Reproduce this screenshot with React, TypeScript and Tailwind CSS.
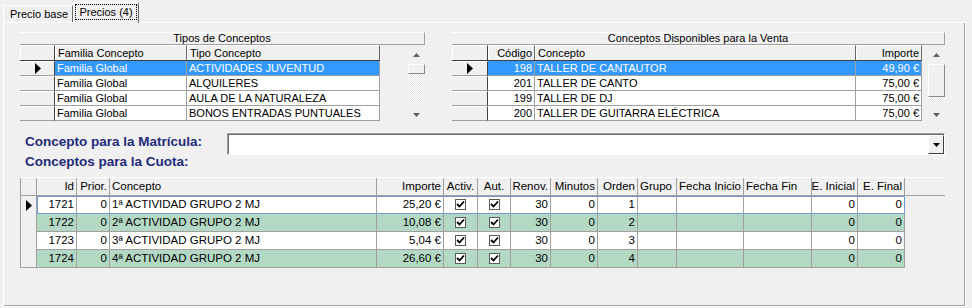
import React from "react";

const DARK = "border-[#696969]";

function RowArrow() {
  return (
    <svg width="6" height="11" viewBox="0 0 6 11" className="block">
      <path d="M0 0 L6 5.5 L0 11 Z" fill="#000" />
    </svg>
  );
}

function UpArrow({ color = "#606060" }: { color?: string }) {
  return (
    <svg width="7" height="4" viewBox="0 0 7 4" className="block">
      <path d="M3.5 0 L7 4 L0 4 Z" fill={color} />
    </svg>
  );
}
function DownArrow({ color = "#606060" }: { color?: string }) {
  return (
    <svg width="7" height="4" viewBox="0 0 7 4" className="block">
      <path d="M0 0 L7 0 L3.5 4 Z" fill={color} />
    </svg>
  );
}

function Check() {
  return (
    <div className="w-[11px] h-[11px] border border-[#5a5a5a] bg-white flex items-center justify-center">
      <svg width="9" height="9" viewBox="0 0 9 9" className="block">
        <path d="M1 4 L3.5 6.5 L8 1.5" stroke="#000" strokeWidth="1.8" fill="none" />
      </svg>
    </div>
  );
}

function ScrollBar({ thumbH }: { thumbH: number }) {
  return (
    <div className="w-[17px] h-[76px] flex flex-col bg-[#f0f0f0]">
      <div className="h-[19px] flex items-center justify-center">
        <UpArrow />
      </div>
      <div
        className="border-t border-l border-white border-r border-b border-r-[#8a8a8a] border-b-[#8a8a8a] bg-[#f0f0f0]"
        style={{ height: thumbH }}
      />
      <div className="flex-1 bg-[repeating-conic-gradient(#ffffff_0_25%,#e3e3e3_0_50%)] bg-[length:2px_2px]" />
      <div className="h-[14px] flex items-center justify-center pt-[2px]">
        <DownArrow />
      </div>
    </div>
  );
}

function TitleBand({ text }: { text: string }) {
  return (
    <div className="h-[13px] border-t border-white border-b border-r border-b-[#a0a0a0] border-r-[#a0a0a0] text-center text-[11px] leading-[11px]">
      {text}
    </div>
  );
}

type Col = { w: number; label: string; align?: "left" | "right" };

function TopGrid({
  cols,
  rows,
  indW,
}: {
  cols: Col[];
  rows: string[][];
  indW: number;
}) {
  return (
    <div className="flex flex-col">
      <div className="flex h-[16px] border-b border-[#404040]">
        <div
          className="h-full border-t border-l border-white border-r border-r-[#404040] bg-[#f0f0f0]"
          style={{ width: indW }}
        />
        {cols.map((c, i) => (
          <div
            key={i}
            className={`h-full border-t border-l border-white border-r border-r-[#696969] bg-[#f0f0f0] px-[2px] text-[11px] leading-[14px] whitespace-nowrap overflow-hidden ${
              c.align === "right" ? "text-right" : "text-left"
            }`}
            style={{ width: c.w }}
          >
            {c.label}
          </div>
        ))}
      </div>
      {rows.map((r, ri) => {
        const sel = ri === 0;
        return (
          <div key={ri} className="flex h-[15px]">
            <div
              className="h-full border-t border-white border-b border-b-[#a0a0a0] border-r border-r-[#404040] bg-[#f0f0f0] flex items-center pl-[15px]"
              style={{ width: indW }}
            >
              {sel && <RowArrow />}
            </div>
            {cols.map((c, ci) => (
              <div
                key={ci}
                className={`h-full border-r border-b border-[#a0a0a0] px-[2px] text-[11px] leading-[14px] whitespace-nowrap overflow-hidden ${
                  c.align === "right" ? "text-right" : "text-left"
                } ${sel ? "bg-[#3399ff] text-white" : "bg-white text-black"}`}
                style={{ width: c.w }}
              >
                {r[ci]}
              </div>
            ))}
          </div>
        );
      })}
    </div>
  );
}

type BCol = { w: number; label: string; h: "l" | "r" | "c" };

const bcols: BCol[] = [
  { w: 40, label: "Id", h: "r" },
  { w: 33, label: "Prior.", h: "r" },
  { w: 267, label: "Concepto", h: "l" },
  { w: 67, label: "Importe", h: "r" },
  { w: 34, label: "Activ.", h: "c" },
  { w: 33, label: "Aut.", h: "c" },
  { w: 40, label: "Renov.", h: "r" },
  { w: 47, label: "Minutos", h: "r" },
  { w: 40, label: "Orden", h: "r" },
  { w: 39, label: "Grupo", h: "l" },
  { w: 67, label: "Fecha Inicio", h: "l" },
  { w: 68, label: "Fecha Fin", h: "l" },
  { w: 46, label: "E. Inicial", h: "r" },
  { w: 47, label: "E. Final", h: "r" },
];

const brows = [
  ["1721", "0", "1ª ACTIVIDAD GRUPO 2 MJ", "25,20 €", "x", "x", "30", "0", "1", "", "", "", "0", "0"],
  ["1722", "0", "2ª ACTIVIDAD GRUPO 2 MJ", "10,08 €", "x", "x", "30", "0", "2", "", "", "", "0", "0"],
  ["1723", "0", "3ª ACTIVIDAD GRUPO 2 MJ", "5,04 €", "x", "x", "30", "0", "3", "", "", "", "0", "0"],
  ["1724", "0", "4ª ACTIVIDAD GRUPO 2 MJ", "26,60 €", "x", "x", "30", "0", "4", "", "", "", "0", "0"],
];

function alignCls(h: "l" | "r" | "c") {
  return h === "r" ? "text-right justify-end" : h === "c" ? "text-center justify-center" : "text-left justify-start";
}

function BottomGrid() {
  return (
    <div className="flex flex-col w-[925px]">
      <div className="flex h-[19px] border-t border-white border-b border-b-[#a0a0a0]">
        <div className="w-[17px] h-full border-l border-r border-[#a0a0a0]" />
        {bcols.map((c, i) => (
          <div
            key={i}
            className={`h-full flex items-center border-r border-[#a0a0a0] px-[2px] text-[11.5px] whitespace-nowrap overflow-hidden ${alignCls(c.h)}`}
            style={{ width: c.w }}
          >
            {c.label}
          </div>
        ))}
      </div>
      {brows.map((r, ri) => {
        const sel = ri === 0;
        const bg = ri % 2 === 1 ? "bg-[#b3d9c5]" : "bg-white";
        return (
          <div key={ri} className="flex h-[18px]">
            <div
              className={`w-[17px] h-full border-l border-r border-[#a0a0a0] bg-[#f0f0f0] flex items-center pl-[5px] ${
                ri === 3 ? "border-b" : ""
              }`}
            >
              {sel && <RowArrow />}
            </div>
            <div
              className={`flex h-full ${bg} ${
                sel ? "outline outline-1 -outline-offset-1 outline-[#6f9bd8]" : ""
              }`}
            >
              {bcols.map((c, ci) => {
                const v = r[ci];
                const isCheck = ci === 4 || ci === 5;
                const al = ci === 2 ? "l" : isCheck ? "c" : "r";
                return (
                  <div
                    key={ci}
                    className={`h-full flex items-center border-r border-b border-[#a0a0a0] px-[2px] text-[11.5px] whitespace-nowrap overflow-hidden ${alignCls(
                      al as "l" | "r" | "c"
                    )}`}
                    style={{ width: c.w }}
                  >
                    {isCheck ? <Check /> : v}
                  </div>
                );
              })}
            </div>
          </div>
        );
      })}
    </div>
  );
}

export default function App() {
  return (
    <div className="w-[972px] h-[308px] bg-[#f0f0f0] text-black font-['Liberation_Sans',Arial,sans-serif] text-[11px] overflow-hidden">
      {/* Tabs */}
      <div className="flex items-end h-[22px] pl-[3px]">
        <div className="h-[17px] w-[70px] border-t border-l border-white border-r border-r-[#696969] rounded-tl-[2px] flex items-center justify-center text-[11px] pl-[2px]">
          Precio base
        </div>
        <div className="relative z-10 -mb-px h-[21px] w-[66px] bg-[#f0f0f0] border-t border-l border-white border-r border-r-[#696969] rounded-t-[2px] flex items-start justify-center pt-[1px]">
          <span className="border border-dotted border-black px-[3px] h-[16px] leading-[14px] text-[11px]">
            Precios (4)
          </span>
        </div>
      </div>
      {/* Panel */}
      <div
        className={`ml-[3px] w-[963px] h-[285px] border-t border-l border-white border-r border-b ${DARK} shadow-[inset_-1px_-1px_0_#a0a0a0] pl-[16px] pt-[9px]`}
      >
        {/* Top grids */}
        <div className="flex gap-[27px]">
          <div className="w-[405px]">
            <TitleBand text="Tipos de Conceptos" />
            <div className="flex h-[76px]">
              <div className="w-[360px]">
                <TopGrid
                  indW={35}
                  cols={[
                    { w: 132, label: "Familia Concepto" },
                    { w: 193, label: "Tipo Concepto" },
                  ]}
                  rows={[
                    ["Familia Global", "ACTIVIDADES JUVENTUD"],
                    ["Familia Global", "ALQUILERES"],
                    ["Familia Global", "AULA DE LA NATURALEZA"],
                    ["Familia Global", "BONOS ENTRADAS PUNTUALES"],
                  ]}
                />
              </div>
              <div className="w-[28px]" />
              <ScrollBar thumbH={10} />
            </div>
          </div>
          <div className="w-[493px]">
            <TitleBand text="Conceptos Disponibles para la Venta" />
            <div className="flex h-[76px]">
              <div className="w-[470px]">
                <TopGrid
                  indW={36}
                  cols={[
                    { w: 47, label: "Código", align: "right" },
                    { w: 321, label: "Concepto" },
                    { w: 66, label: "Importe", align: "right" },
                  ]}
                  rows={[
                    ["198", "TALLER DE CANTAUTOR", "49,90 €"],
                    ["201", "TALLER DE CANTO", "75,00 €"],
                    ["199", "TALLER DE DJ", "75,00 €"],
                    ["200", "TALLER DE GUITARRA ELÉCTRICA", "75,00 €"],
                  ]}
                />
              </div>
              <div className="w-[6px]" />
              <ScrollBar thumbH={33} />
            </div>
          </div>
        </div>

        {/* Middle labels */}
        <div className="mt-[13px] flex h-[20px]">
          <div className="w-[207px] pl-[5px] h-[20px] leading-[16px] text-[13.5px] font-bold text-[#1f2a7a] whitespace-nowrap">
            Concepto para la Matrícula:
          </div>
          <div className="-mt-px w-[718px] h-[22px] border-t border-l border-[#a0a0a0] border-r border-b border-r-white border-b-white">
            <div className="w-full h-full border-t border-l border-[#696969] bg-white flex justify-end">
              <div className="w-[16px] h-[19px] border-t border-l border-white border-r border-b border-r-[#404040] border-b-[#404040] bg-[#f0f0f0] flex items-center justify-center">
                <DownArrow color="#000" />
              </div>
            </div>
          </div>
        </div>
        <div className="pl-[5px] h-[16px] leading-[16px] text-[13.5px] font-bold text-[#1f2a7a] whitespace-nowrap">
          Conceptos para la Cuota:
        </div>

        {/* Bottom grid */}
        <div className="mt-[7px]">
          <BottomGrid />
        </div>
      </div>
    </div>
  );
}
